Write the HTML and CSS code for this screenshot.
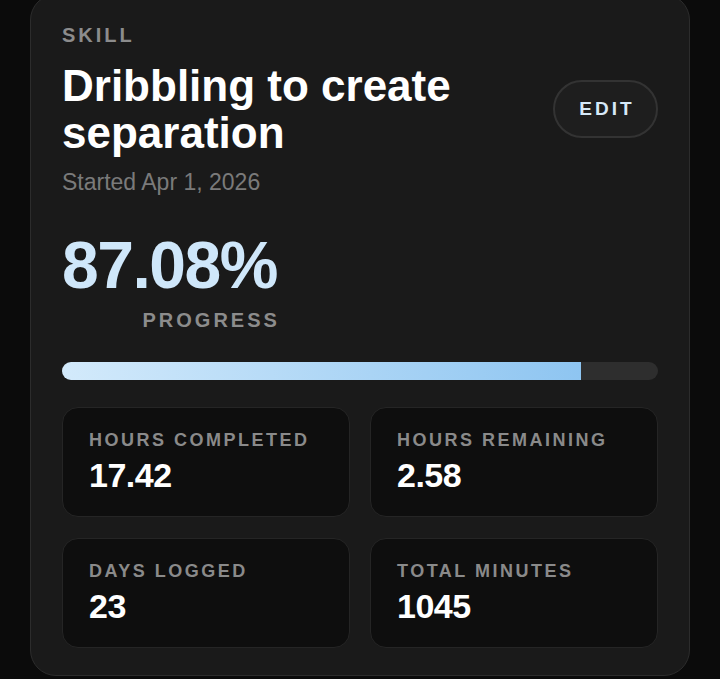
FILE: index.html
```html
<!DOCTYPE html>
<html>
<head>
<meta charset="utf-8">
<link rel="stylesheet" href="styles.css">
</head>
<body>
<main class="card">
  <header class="head">
    <div class="head-text">
      <div class="eyebrow">SKILL</div>
      <h1 class="title">Dribbling to create separation</h1>
      <div class="started">Started Apr 1, 2026</div>
    </div>
    <button class="edit">EDIT</button>
  </header>
  <section class="progress">
    <div class="pct">87.08%</div>
    <div class="pct-label">PROGRESS</div>
  </section>
  <div class="bar"><div class="bar-fill" style="width:87.08%"></div></div>
  <section class="stats">
    <div class="stat"><div class="stat-label">HOURS COMPLETED</div><div class="stat-value">17.42</div></div>
    <div class="stat"><div class="stat-label">HOURS REMAINING</div><div class="stat-value">2.58</div></div>
    <div class="stat"><div class="stat-label">DAYS LOGGED</div><div class="stat-value">23</div></div>
    <div class="stat"><div class="stat-label">TOTAL MINUTES</div><div class="stat-value">1045</div></div>
  </section>
</main>
</body>
</html>
```
FILE: styles.css
```css
html, body {
  margin: 0;
  padding: 0;
  background: #0b0b0b;
  height: 100%;
  overflow: hidden;
}
body {
  font-family: "Liberation Sans", Arial, sans-serif;
  color: #fff;
}
.card {
  margin: -6px 30px 0;
  background: #1a1a1a;
  border: 1px solid #2c2c2c;
  border-radius: 26px;
  padding: 29px 31px 27px;
}
.head {
  display: flex;
  align-items: center;
  justify-content: space-between;
}
.eyebrow {
  font-size: 20px;
  font-weight: 700;
  letter-spacing: 3px;
  color: #8c8c8c;
  line-height: 22px;
}
.title {
  margin: 16px 0 0;
  font-size: 44px;
  font-weight: 700;
  line-height: 47px;
  max-width: 440px;
}
.started {
  margin-top: 13px;
  font-size: 23px;
  color: #7a7a7a;
  line-height: 26px;
}
.edit {
  font-family: inherit;
  background: #1e1e1e;
  border: 2px solid #333;
  border-radius: 30px;
  color: #d6e9f8;
  font-size: 19px;
  font-weight: 700;
  letter-spacing: 3px;
  width: 105px;
  height: 58px;
  padding: 0 0 0 3px;
  margin-top: -2px;
}
.progress {
  display: inline-flex;
  flex-direction: column;
  align-items: flex-end;
  margin-top: 37px;
}
.pct {
  font-size: 66px;
  font-weight: 700;
  line-height: 66px;
  color: #cfe7fa;
  letter-spacing: -1.5px;
}
.pct-label {
  margin-top: 11px;
  font-size: 20px;
  font-weight: 700;
  letter-spacing: 3px;
  color: #8c8c8c;
  line-height: 22px;
  margin-right: -3px;
}
.bar {
  margin-top: 31px;
  height: 18px;
  border-radius: 9px;
  background: #2e2e2e;
  overflow: hidden;
}
.bar-fill {
  height: 100%;
  background: linear-gradient(90deg, #d3eafb, #8ec5f1);
}
.stats {
  margin-top: 27px;
  display: grid;
  grid-template-columns: 1fr 1fr;
  gap: 21px 20px;
}
.stat {
  background: #0e0e0e;
  border: 1px solid #252525;
  border-radius: 16px;
  height: 110px;
  box-sizing: border-box;
  padding: 22px 26px;
}
.stat-label {
  font-size: 18px;
  font-weight: 700;
  letter-spacing: 2.5px;
  color: #8a8a8a;
  line-height: 20px;
}
.stat-value {
  margin-top: 6px;
  font-size: 34px;
  font-weight: 700;
  line-height: 38px;
  letter-spacing: -0.5px;
}
```
